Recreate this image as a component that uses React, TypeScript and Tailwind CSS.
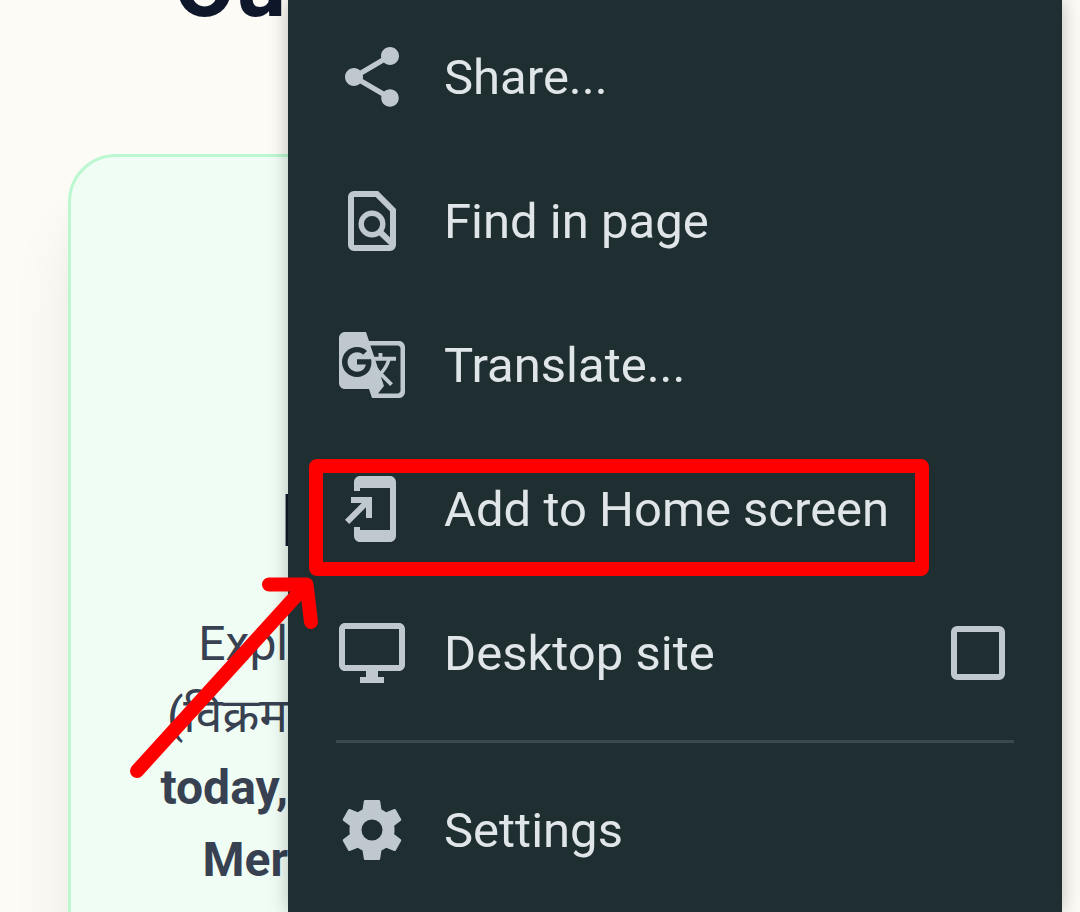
import type { ReactNode } from "react";
import { MdAddToHomeScreen, MdGTranslate, MdShare } from "react-icons/md";

function FindInPageIcon() {
  return (
    <svg viewBox="0 0 24 24" className="size-[72px]" fill="none" stroke="currentColor" strokeWidth="2" aria-hidden="true">
      <path d="M6 3h7.6L19 8.4V20a1 1 0 0 1-1 1H6a1 1 0 0 1-1-1V4a1 1 0 0 1 1-1z" />
      <circle cx="12" cy="13" r="3.6" strokeWidth="1.8" />
      <path d="M14.5 15.5l4.6 4.4" />
    </svg>
  );
}

function DesktopIcon() {
  return (
    <svg viewBox="0 0 24 24" className="size-[72px]" fill="currentColor" aria-hidden="true">
      <path d="M21 2H3c-1.1 0-2 .9-2 2v12c0 1.1.9 2 2 2h7v2H8v2h8v-2h-2v-2h7c1.1 0 2-.9 2-2V4c0-1.1-.9-2-2-2zm0 14H3V4h18v12z" />
    </svg>
  );
}

function SettingsIcon() {
  return (
    <svg viewBox="0 0 24 24" className="size-[72px]" fill="currentColor" aria-hidden="true">
      <path
        fillRule="evenodd"
        d="M9.7 2h4.6q.35 0 .42.35L15.15 5.2q.82.35 1.55.9l2.7-1.08q.35-.12.52.18l1.78 3.1q.18.33-.1.58l-2.2 1.72q.1.7.1 1.4t-.1 1.4l2.2 1.72q.28.25.1.58l-1.78 3.1q-.17.3-.52.18l-2.7-1.08q-.73.55-1.55.9l-.43 2.85q-.07.35-.42.35H9.7q-.35 0-.42-.35L8.85 18.8q-.82-.35-1.55-.9l-2.7 1.08q-.35.12-.52-.18L2.3 15.7q-.18-.33.1-.58l2.2-1.72Q4.5 12.7 4.5 12t.1-1.4L2.4 8.88q-.28-.25-.1-.58l1.78-3.1q.17-.3.52-.18L7.3 6.1q.73-.55 1.55-.9l.43-2.85Q9.35 2 9.7 2zM12 8.5a3.5 3.5 0 1 0 0 7a3.5 3.5 0 0 0 0-7z"
      />
    </svg>
  );
}

function MenuItem({ icon, label }: { icon: ReactNode; label: string }) {
  return (
    <button type="button" className="flex h-36 w-full items-center gap-9 px-12 text-left">
      <span className="shrink-0 text-[#bfc8cc]">{icon}</span>
      <span className="pt-0.5 whitespace-nowrap">{label}</span>
    </button>
  );
}

function Menu() {
  return (
    <nav
      aria-label="Browser menu"
      className="absolute inset-y-0 right-[18px] left-[288px] overflow-hidden bg-[#1e2e31] pt-[5px] text-[49px] leading-[60px] text-[#e0e5ea] shadow-[0_0_18px_rgba(0,0,0,0.25)]"
    >
      <MenuItem icon={<MdShare className="size-[72px]" />} label="Share..." />
      <MenuItem icon={<FindInPageIcon />} label="Find in page" />
      <MenuItem icon={<MdGTranslate className="size-[72px]" />} label="Translate..." />
      <MenuItem icon={<MdAddToHomeScreen className="size-[72px]" />} label="Add to Home screen" />
      <label className="flex h-36 items-center gap-9 px-12">
        <span className="shrink-0 text-[#bfc8cc]">
          <DesktopIcon />
        </span>
        <span className="flex-1 pt-0.5 whitespace-nowrap">Desktop site</span>
        <input
          type="checkbox"
          className="mr-[9px] size-[54px] shrink-0 appearance-none rounded-md border-6 border-[#bfc8cc] checked:bg-[#bfc8cc]"
        />
      </label>
      <hr className="mx-12 my-[15px] border-t-3 border-[#3b484c]" />
      <MenuItem icon={<SettingsIcon />} label="Settings" />
    </nav>
  );
}

function Annotation() {
  return (
    <div className="pointer-events-none absolute inset-0" aria-hidden="true">
      <div className="absolute top-[459px] left-[309px] h-[117px] w-[620px] rounded-lg border-14 border-[#ff0000]" />
      <svg
        className="absolute top-[570px] left-[120px] h-[220px] w-[210px]"
        viewBox="120 570 210 220"
        fill="none"
        stroke="#ff0000"
        strokeWidth="14"
        strokeLinecap="round"
        strokeLinejoin="round"
      >
        <path d="M137 771L306 585" />
        <path d="M269 584.500H306.500L311 622" />
      </svg>
    </div>
  );
}

export default function App() {
  return (
    <div className="relative h-screen overflow-hidden bg-[#fdfbf6] font-['Roboto','Noto_Sans',sans-serif]">
      <main className="flex h-full flex-col px-[68px]">
        <div className="flex h-[154px] shrink-0 items-start">
          <h1 className="-mt-16 w-[218px] text-right text-[90px] leading-[100px] font-bold text-[#0f172a]">Ou</h1>
        </div>
        <section className="-mb-24 flex-1 rounded-t-[48px] border-3 border-[#bbf7d0] bg-[#f0fdf4] pt-80 shadow-[0_60px_75px_-15px_rgba(0,0,0,0.1),0_24px_30px_-18px_rgba(0,0,0,0.1)]">
          <div className="w-[217px] text-right whitespace-nowrap">
            <h2 className="ml-[210px] text-left text-7xl leading-[90px] font-bold text-[#0f172a]">H</h2>
            <p className="mt-[41px] text-5xl leading-[72px] text-[#374151]">
              Expl
              <br />
              (विक्रम
              <br />
              <strong className="font-bold">today,</strong>
              <br />
              <strong className="font-bold">Mer</strong>
            </p>
          </div>
        </section>
      </main>
      <Menu />
      <Annotation />
    </div>
  );
}
